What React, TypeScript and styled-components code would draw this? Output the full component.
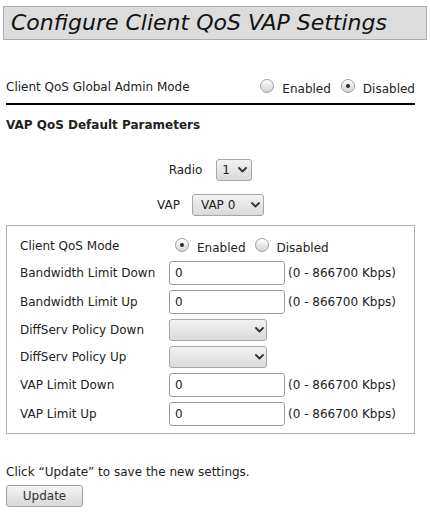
import React from "react";
import styled, { createGlobalStyle } from "styled-components";

const GlobalStyle = createGlobalStyle`
  html, body {
    margin: 0;
    padding: 0;
    background: #fff;
  }
  body {
    font-family: "DejaVu Sans", Verdana, sans-serif;
    font-size: 12px;
    color: #222;
  }
`;

const Page = styled.div`
  padding: 6px 3px 6px 3px;
  width: 430px;
  box-sizing: border-box;
`;

const TitleBox = styled.h1`
  margin: 0;
  height: 34px;
  box-sizing: border-box;
  padding: 0 0 0 7px;
  background: #dcdcdc;
  border: 1px solid #a9afbf;
  font-size: 22px;
  font-weight: normal;
  font-style: italic;
  line-height: 32px;
  color: #111;
`;

const Content = styled.div`
  margin-left: 3px;
  width: 409px;
`;

const GlobalRow = styled.div`
  display: flex;
  justify-content: space-between;
  align-items: center;
  height: 22px;
  margin-top: 36px;
`;

const RadioGroup = styled.div`
  display: flex;
  align-items: center;
  margin-left: ${({ $indent }: { $indent?: number }) => $indent ?? 0}px;
`;

const RadioLabel = styled.label`
  display: flex;
  align-items: center;
  margin-left: ${({ $gap }: { $gap?: number }) => $gap ?? 0}px;
  padding-top: 4px;
`;

const Radio = styled.input.attrs({ type: "radio" })`
  appearance: none;
  -webkit-appearance: none;
  width: 14px;
  height: 14px;
  margin: 0 8px 0 0;
  position: relative;
  top: -3px;
  border-radius: 50%;
  border: 1px solid #a0a0a0;
  background: linear-gradient(#fdfdfd, #d4d4d4);
  box-sizing: border-box;
  display: grid;
  place-items: center;

  &:checked::after {
    content: "";
    width: 4px;
    height: 4px;
    border-radius: 50%;
    background: #2a2a2a;
  }
`;

const Divider = styled.hr`
  margin: 5px 0 0 0;
  border: none;
  height: 2px;
  background: #000;
`;

const SectionTitle = styled.h2`
  margin: 13px 0 0 0;
  font-size: 12px;
  font-weight: bold;
  line-height: 15px;
`;

const CenterRow = styled.div`
  display: flex;
  justify-content: center;
  align-items: center;
  gap: ${({ $gap }: { $gap: number }) => $gap}px;
  margin-top: ${({ $top }: { $top: number }) => $top}px;
`;

const SelectWrap = styled.div`
  position: relative;
  width: ${({ $w }: { $w: number }) => $w}px;
  height: 22px;
`;

const Select = styled.select`
  appearance: none;
  -webkit-appearance: none;
  width: 100%;
  height: 100%;
  box-sizing: border-box;
  border: 1px solid #a6a6a6;
  border-radius: 3px;
  background: linear-gradient(#f2f2f2, #dadada);
  font-family: "DejaVu Sans", Verdana, sans-serif;
  font-size: 12px;
  color: #222;
  padding: 0 0 0 ${({ $pad }: { $pad: number }) => $pad}px;
  outline: none;
`;

const Chevron = styled.svg`
  position: absolute;
  right: ${({ $right }: { $right: number }) => $right}px;
  top: 8px;
  width: 9px;
  height: 6px;
  pointer-events: none;
`;

const ParamBox = styled.div`
  margin-top: 9px;
  border: 1px solid #a9afbf;
  padding: 8px 0 5px 13px;
`;

const ParamRow = styled.div`
  display: grid;
  grid-template-columns: 149px auto auto;
  align-items: center;
  justify-content: start;
  height: ${({ $h }: { $h: number }) => $h}px;
`;

const ParamLabel = styled.span`
  white-space: nowrap;
`;

const TextInput = styled.input`
  width: 116px;
  height: 24px;
  box-sizing: border-box;
  border: 1px solid #9c9c9c;
  border-radius: 3px;
  padding: 0 5px;
  font-family: "DejaVu Sans", Verdana, sans-serif;
  font-size: 12px;
  color: #222;
  outline: none;
`;

const RangeText = styled.span`
  margin-left: 3px;
  white-space: nowrap;
`;

const Note = styled.p`
  margin: 31px 0 0 0;
  line-height: 15px;
`;

const Button = styled.button`
  margin-top: 5px;
  width: 77px;
  height: 22px;
  border: 1px solid #a0a0a0;
  border-radius: 3px;
  background: linear-gradient(#f4f4f4, #d8d8d8);
  font-family: "DejaVu Sans", Verdana, sans-serif;
  font-size: 12px;
  color: #333;
  padding: 0;
`;

const ChevronIcon = ({ right }: { right: number }) => (
  <Chevron $right={right} viewBox="0 0 9 6">
    <polyline
      points="1 1 4.5 4.5 8 1"
      fill="none"
      stroke="#333"
      strokeWidth="1.8"
      strokeLinecap="round"
      strokeLinejoin="round"
    />
  </Chevron>
);

const SelectBox = ({
  width,
  pad,
  right,
  options,
}: {
  width: number;
  pad: number;
  right: number;
  options: string[];
}) => (
  <SelectWrap $w={width}>
    <Select $pad={pad} defaultValue={options[0]}>
      {options.map((o) => (
        <option key={o}>{o}</option>
      ))}
    </Select>
    <ChevronIcon right={right} />
  </SelectWrap>
);

const InputRow = ({ label }: { label: string }) => (
  <ParamRow $h={29}>
    <ParamLabel>{label}</ParamLabel>
    <TextInput type="text" defaultValue="0" />
    <RangeText>(0 - 866700 Kbps)</RangeText>
  </ParamRow>
);

const PolicyRow = ({ label }: { label: string }) => (
  <ParamRow $h={27}>
    <ParamLabel>{label}</ParamLabel>
    <SelectBox width={98} pad={6} right={3} options={[""]} />
  </ParamRow>
);

export default function App() {
  return (
    <Page>
      <GlobalStyle />
      <TitleBox>Configure Client QoS VAP Settings</TitleBox>
      <Content>
        <GlobalRow>
          <span>Client QoS Global Admin Mode</span>
          <RadioGroup>
            <RadioLabel>
              <Radio name="global" />
              Enabled
            </RadioLabel>
            <RadioLabel $gap={10}>
              <Radio name="global" defaultChecked />
              Disabled
            </RadioLabel>
          </RadioGroup>
        </GlobalRow>
        <Divider />
        <SectionTitle>VAP QoS Default Parameters</SectionTitle>

        <CenterRow $gap={14} $top={26}>
          <span>Radio</span>
          <SelectBox width={36} pad={5} right={5} options={["1", "2"]} />
        </CenterRow>
        <CenterRow $gap={12} $top={13}>
          <span>VAP</span>
          <SelectBox
            width={72}
            pad={8}
            right={4}
            options={["VAP 0", "VAP 1", "VAP 2", "VAP 3"]}
          />
        </CenterRow>

        <ParamBox>
          <ParamRow $h={24}>
            <ParamLabel>Client QoS Mode</ParamLabel>
            <RadioGroup $indent={6}>
              <RadioLabel>
                <Radio name="mode" defaultChecked />
                Enabled
              </RadioLabel>
              <RadioLabel $gap={9}>
                <Radio name="mode" />
                Disabled
              </RadioLabel>
            </RadioGroup>
          </ParamRow>
          <InputRow label="Bandwidth Limit Down" />
          <InputRow label="Bandwidth Limit Up" />
          <PolicyRow label="DiffServ Policy Down" />
          <PolicyRow label="DiffServ Policy Up" />
          <InputRow label="VAP Limit Down" />
          <InputRow label="VAP Limit Up" />
        </ParamBox>

        <Note>Click “Update” to save the new settings.</Note>
        <Button type="button">Update</Button>
      </Content>
    </Page>
  );
}
